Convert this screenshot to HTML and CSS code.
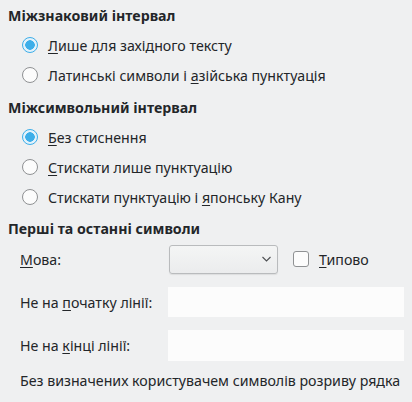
FILE: index.html
```html
<!DOCTYPE html>
<html>
<head>
    <title>Азійська типографія</title>
    <link rel="stylesheet" href="styles.css">
</head>
<body>
    <div class="page">
        <div class="group first">
            <div class="group-title">Міжзнаковий інтервал</div>
            <div class="options">
                <label class="option"><span class="radio checked"></span><span><u>Л</u>ише для західного тексту</span></label>
                <label class="option"><span class="radio"></span><span>Латинські символи і <u>а</u>зійська пунктуація</span></label>
            </div>
        </div>

        <div class="group second">
            <div class="group-title">Міжсимвольний інтервал</div>
            <div class="options">
                <label class="option"><span class="radio checked"></span><span><u>Б</u>ез стиснення</span></label>
                <label class="option"><span class="radio"></span><span><u>С</u>тискати лише пунктуацію</span></label>
                <label class="option"><span class="radio"></span><span>Стискати пунктуацію і <u>я</u>понську Кану</span></label>
            </div>
        </div>

        <div class="group third">
            <div class="group-title">Перші та останні символи</div>
            <div class="form">
                <div class="form-row lang-row">
                    <span class="form-label"><u>М</u>ова:</span>
                    <div class="combo">
                        <svg class="chevron" width="9" height="6" viewBox="0 0 9 6">
                            <path d="M0.5 1 L4.5 5 L8.5 1" fill="none" stroke="#4d4f52" stroke-width="1.1"/>
                        </svg>
                    </div>
                    <label class="check"><span class="checkbox"></span><span><u>Т</u>ипово</span></label>
                </div>
                <div class="form-row input-row">
                    <span class="form-label">Не на <u>п</u>очатку лінії:</span>
                    <div class="text-input"></div>
                </div>
                <div class="form-row input-row">
                    <span class="form-label">Не на <u>к</u>інці лінії:</span>
                    <div class="text-input"></div>
                </div>
                <div class="note">Без визначених користувачем символів розриву рядка</div>
            </div>
        </div>
    </div>
</body>
</html>
```

FILE: styles.css
```css
body {
    background-color: #eff0f1;
    color: #232629;
    font-family: 'Noto Sans', sans-serif;
    font-size: 14.2px;
    margin: 0;
}
u {
    text-decoration: underline;
    text-underline-offset: 2px;
}
.page {
    padding: 1px 8px 0;
}
.group-title {
    height: 29px;
    line-height: 29px;
    font-weight: bold;
}
.second {
    margin-top: 3px;
}
.third {
    margin-top: 2px;
}
.options {
    padding-left: 14px;
}
.option {
    display: flex;
    align-items: center;
    gap: 10px;
    height: 30px;
}
.radio {
    width: 14px;
    height: 14px;
    border: 1px solid #8f9193;
    border-radius: 50%;
    background-color: #fcfcfc;
    flex: none;
}
.radio.checked {
    border-color: #3daee9;
    background: radial-gradient(circle, #3daee9 0 4.5px, #e3f2fb 5px);
}
.form {
    padding-left: 12px;
}
.form-row {
    display: flex;
    align-items: center;
}
.form-label {
    width: 148px;
    flex: none;
}
.lang-row {
    height: 30px;
    margin-top: 1px;
}
.combo {
    width: 101px;
    height: 27px;
    margin-left: 1px;
    border: 1px solid #b9bbbd;
    border-radius: 3px;
    background: linear-gradient(#f4f5f5, #ebeced);
    display: flex;
    align-items: center;
    justify-content: flex-end;
    padding-right: 6px;
    box-shadow: 0 1px 1px rgba(0, 0, 0, 0.08);
}
.check {
    display: flex;
    align-items: center;
    gap: 10px;
    margin-left: 15px;
}
.checkbox {
    width: 14px;
    height: 14px;
    border: 1px solid #8f9193;
    border-radius: 3px;
    background-color: #fcfcfc;
}
.input-row {
    height: 30px;
    margin-top: 13px;
}
.input-row + .input-row {
    height: 31px;
}
.text-input {
    flex: 1;
    align-self: stretch;
    background-color: #fcfcfc;
}
.note {
    margin-top: 10px;
    line-height: 20px;
}
```
